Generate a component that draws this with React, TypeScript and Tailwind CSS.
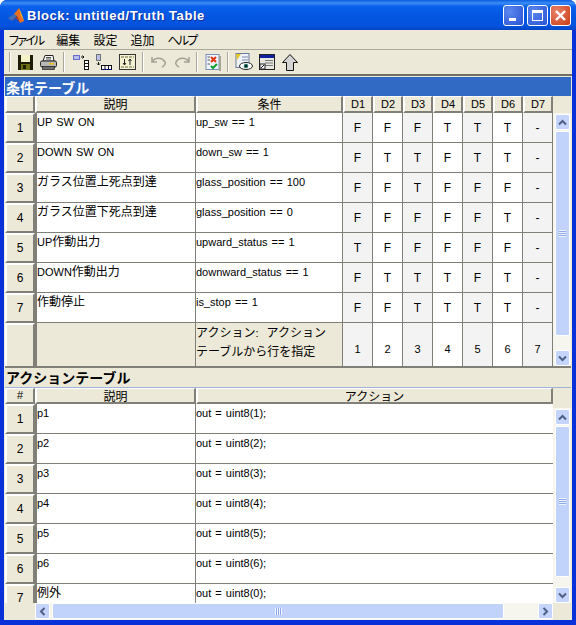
const uiFont = "[font-family:'Noto_Sans_CJK_JP',sans-serif]";

const menus = ["ファイル", "編集", "設定", "追加", "ヘルプ"];

const conditions = [
  { desc: "UP SW ON", cond: "up_sw == 1", d: "FFFTTT-" },
  { desc: "DOWN SW ON", cond: "down_sw == 1", d: "FTTFTT-" },
  { desc: "ガラス位置上死点到達", cond: "glass_position == 100", d: "FFTFFF-" },
  { desc: "ガラス位置下死点到達", cond: "glass_position == 0", d: "FFFFFT-" },
  { desc: "UP作動出力", cond: "upward_status == 1", d: "TFFFFF-" },
  { desc: "DOWN作動出力", cond: "downward_status == 1", d: "FTTTFT-" },
  { desc: "作動停止", cond: "is_stop == 1", d: "FFTTTT-" },
];

const actions = [
  { desc: "p1", code: "out = uint8(1);" },
  { desc: "p2", code: "out = uint8(2);" },
  { desc: "p3", code: "out = uint8(3);" },
  { desc: "p4", code: "out = uint8(4);" },
  { desc: "p5", code: "out = uint8(5);" },
  { desc: "p6", code: "out = uint8(6);" },
  { desc: "例外", code: "out = uint8(0);" },
];

// latin runs are set smaller and with wider spaces, the way the bitmap font looks
function Txt({ text }: { text: string }) {
  const parts = text.split(/([\x00-\x7f]+)/).filter(Boolean);
  return (
    <>
      {parts.map((p, i) =>
        /^[\x00-\x7f]/.test(p) ? (
          <span key={i} className="text-[11px] [font-family:'Liberation_Sans',sans-serif] [word-spacing:1px] whitespace-pre">
            {p}
          </span>
        ) : (
          <span key={i}>{p}</span>
        )
      )}
    </>
  );
}

function HeadCell({ className, children }: { className: string; children?: React.ReactNode }) {
  return (
    <div
      className={`${className} flex items-center justify-center bg-[#ece9d8] border-t border-l-2 border-white border-r-2 border-r-[#808078] border-b-2 border-b-[#808078] text-[12px] leading-none text-black`}
    >
      {children}
    </div>
  );
}

function RowHead({ n }: { n: number }) {
  return (
    <div className="w-[30px] h-[30px] shrink-0 flex items-center justify-center bg-[#ece9d8] border-t-2 border-l-2 border-white border-r-2 border-r-[#808078] border-b-2 border-b-[#808078] text-[12px] text-black [font-family:'Liberation_Sans',sans-serif]">
      {n}
    </div>
  );
}

// the last row is cut by the scrollbar, so its head has no bottom edge
function LastRowHead({ n }: { n: number }) {
  return (
    <div className="w-[30px] h-[19px] shrink-0 flex justify-center pt-[7px] bg-[#ece9d8] border-t-2 border-l-2 border-white border-r-2 border-r-[#808078] text-[12px] leading-[10px] text-black [font-family:'Liberation_Sans',sans-serif]">
      {n}
    </div>
  );
}

function ScrollArrow({ dir }: { dir: "up" | "down" | "left" | "right" }) {
  const rot = { up: "", down: "rotate-180", left: "-rotate-90", right: "rotate-90" }[dir];
  return (
    <div className="w-[15px] h-[16px] shrink-0 flex items-center justify-center rounded-[2px] bg-[#c4d4fb] border border-white">
      <svg width="9" height="7" viewBox="0 0 9 7" className={rot}>
        <path d="M1 5.5 L4.5 2 L8 5.5" fill="none" stroke="#4d6185" strokeWidth="2" />
      </svg>
    </div>
  );
}

function VScroll({ thumb }: { thumb: string }) {
  return (
    <div className="flex-1 min-h-0 w-[18px] flex flex-col items-start pl-[2px] pt-px bg-[#f6f5ee]">
      <ScrollArrow dir="up" />
      <div className={`${thumb} w-[15px] mt-px rounded-[2px] bg-[#c1d2fb] border border-white flex items-center justify-center`}>
        <div className="w-[7px] h-[7px] bg-[repeating-linear-gradient(to_bottom,#eef3fe_0,#eef3fe_1px,#8fa9e8_1px,#8fa9e8_2px)]" />
      </div>
      <div className="flex-1" />
      <ScrollArrow dir="down" />
    </div>
  );
}

function Sep() {
  return <div className="w-[2px] h-[20px] mx-[3px] bg-[#a9a799] border-r border-white" />;
}

function ToolIcon({ children, className = "" }: { children: React.ReactNode; className?: string }) {
  return <div className={`w-[23px] h-[22px] flex items-center justify-center ${className}`}>{children}</div>;
}

const captionBtn = "w-[21px] h-[21px] rounded-[3px] border border-white";

export default function App() {
  return (
    <div className={`${uiFont} w-[576px] h-[625px] overflow-hidden flex flex-col bg-[#0831d9] rounded-t-[7px]`}>
      {/* title bar */}
      <div className="h-[30px] shrink-0 flex items-center pl-[8px] pr-[5px] bg-[linear-gradient(to_bottom,#0a5be0_0%,#3a8cf5_10%,#0860ea_22%,#0355e0_60%,#0553e0_85%,#0246c4_100%)]">
        <svg width="17" height="17" viewBox="0 0 17 17" className="mr-[2px] mt-px">
          <path d="M0 11 L6 7 L9 9 L4 14 Z" fill="#3f6fb4" />
          <path d="M6 7 L11 1 L16 14 L12 16 L9 9 Z" fill="#e8701c" />
          <path d="M11 1 L14 8 L16 14 L13 9 Z" fill="#f6b23c" />
          <path d="M4 14 L9 9 L12 16 L8 11 Z" fill="#b5361a" />
        </svg>
        <span className="text-white font-bold text-[13px] tracking-[0.55px] mt-px [font-family:'Liberation_Sans',sans-serif] [text-shadow:1px_1px_0_#0f2f9c]">
          Block: untitled/Truth Table
        </span>
        <div className="ml-auto flex">
          <div className={`${captionBtn} mr-[3px] bg-[radial-gradient(circle_at_30%_30%,#5a88ee,#2a52d4)] flex items-end pl-[5px] pb-[4px]`}>
            <div className="w-[7px] h-[3px] bg-white" />
          </div>
          <div className={`${captionBtn} mr-[2px] bg-[radial-gradient(circle_at_30%_30%,#5a88ee,#2a52d4)] flex items-center justify-center`}>
            <div className="w-[11px] h-[11px] border border-white border-t-[3px]" />
          </div>
          <div className={`${captionBtn} bg-[radial-gradient(circle_at_30%_30%,#e8826a,#c83c14)] flex items-center justify-center`}>
            <svg width="13" height="13" viewBox="0 0 13 13">
              <path d="M2 2 L11 11 M11 2 L2 11" stroke="#fff" strokeWidth="2.4" />
            </svg>
          </div>
        </div>
      </div>

      <div className="flex-1 min-h-0 mx-[4px] mb-[5px] flex flex-col bg-[#ece9d8]">
        {/* menu */}
        <div className="h-[20px] shrink-0 flex items-center gap-[13px] pl-[5px] border-b border-[#aca899] text-[12px] text-black [font-feature-settings:'palt']">
          {menus.map((m) => (
            <span key={m} className={/[ァ-ヶ]/.test(m) ? "tracking-[-1.8px]" : ""}>
              {m}
            </span>
          ))}
        </div>

        {/* toolbar */}
        <div className="h-[26px] shrink-0 flex items-center pl-[2px] border-b-2 border-[#716f64]">
          <Sep />
          <ToolIcon>
            <svg width="15" height="15" viewBox="0 0 15 15">
              <path d="M0 0 H15 V15 H0 Z" fill="#1c1c08" />
              <rect x="3" y="0" width="9" height="7" fill="#f4f2c8" />
              <rect x="3" y="9" width="9" height="6" fill="#6e6e14" />
              <rect x="5" y="10" width="3" height="4" fill="#1c1c08" />
            </svg>
          </ToolIcon>
          <ToolIcon>
            <svg width="17" height="15" viewBox="0 0 17 15">
              <path d="M5 0.5 H13 L14 6 H3 Z" fill="#fff" stroke="#222" />
              <path d="M6 2.5 H11 M6 4 H11" stroke="#555" />
              <rect x="0.5" y="6" width="16" height="6" rx="1.5" fill="#b8b8b8" stroke="#222" />
              <rect x="9" y="8" width="5" height="1.5" fill="#e8c000" />
              <rect x="2.5" y="11.5" width="12" height="3" fill="#707070" stroke="#222" strokeWidth="0.7" />
            </svg>
          </ToolIcon>
          <Sep />
          <ToolIcon className="ml-px">
            <svg width="18" height="17" viewBox="0 0 18 17">
              <rect x="1.5" y="1.5" width="6" height="4" fill="#b8c0e8" stroke="#0000c0" strokeDasharray="1 1" />
              <path d="M9 3 H12 M12 3 L10.5 1.5 M12 3 L10.5 4.5" stroke="#111" />
              <rect x="12.5" y="6.5" width="4" height="9" fill="#fff" stroke="#111" />
              <path d="M12 9.5 H17 M12 12.5 H17" stroke="#111" />
            </svg>
          </ToolIcon>
          <ToolIcon>
            <svg width="18" height="17" viewBox="0 0 18 17">
              <rect x="1.5" y="0.5" width="4" height="6" fill="#b8c0e8" stroke="#111" strokeDasharray="1 1" />
              <path d="M3.5 8 V11 M3.5 11 L2 9.5 M3.5 11 L5 9.5" stroke="#111" />
              <rect x="6.5" y="11.5" width="10" height="4" fill="#fff" stroke="#111" />
              <path d="M10 11 V16 M13.5 11 V16" stroke="#111" />
              <path d="M7 15.5 H16" stroke="#0000d0" strokeDasharray="1 1" />
            </svg>
          </ToolIcon>
          <ToolIcon className="ml-px">
            <svg width="17" height="16" viewBox="0 0 17 16">
              <rect x="0.5" y="0.5" width="16" height="15" fill="#f4f2d0" stroke="#333" />
              <path d="M2 3 H15 M2 13 H15" stroke="#6a6a40" strokeDasharray="3 1" />
              <path d="M5.5 5 V11 M4 9 L5.5 11 L7 9 M11 5 V11 M9.5 7 L11 5 L12.5 7" fill="none" stroke="#222" />
            </svg>
          </ToolIcon>
          <Sep />
          <ToolIcon>
            <svg width="16" height="12" viewBox="0 0 16 12">
              <path d="M1 1 V6 H6 M1 6 C4 1 11 1 14 6 C15 8 13 10 11 11" fill="none" stroke="#a3a195" strokeWidth="1.5" />
            </svg>
          </ToolIcon>
          <ToolIcon>
            <svg width="16" height="12" viewBox="0 0 16 12">
              <path d="M15 1 V6 H10 M15 6 C12 1 5 1 2 6 C1 8 3 10 5 11" fill="none" stroke="#a3a195" strokeWidth="1.5" />
            </svg>
          </ToolIcon>
          <Sep />
          <ToolIcon>
            <svg width="16" height="17" viewBox="0 0 16 17">
              <rect x="1" y="0.5" width="13" height="15" fill="#f0f4ff" stroke="#7890b8" />
              <rect x="14" y="2" width="2" height="15" fill="#a8a698" />
              <path d="M6 3 L11 8 M11 3 L6 8" stroke="#e03010" strokeWidth="2" />
              <path d="M6 12 L8 14 L12 10" fill="none" stroke="#10a030" strokeWidth="2" />
              <path d="M2.5 3 H5 M2.5 6 H5 M2.5 10 H5" stroke="#555" />
            </svg>
          </ToolIcon>
          <Sep />
          <ToolIcon>
            <svg width="18" height="18" viewBox="0 0 18 18">
              <rect x="1" y="0.5" width="13" height="14" fill="#eef2fa" stroke="#6a7a9a" />
              <path d="M1 1 H6 L2 7 Z" fill="#e8c820" />
              <path d="M7 4 H13 M7 7 H13" stroke="#7a8ab0" />
              <ellipse cx="11" cy="13" rx="6.5" ry="3.5" fill="#fff" stroke="#222" />
              <circle cx="11" cy="13" r="2.3" fill="#1f7a70" />
              <circle cx="11" cy="13" r="1" fill="#000" />
            </svg>
          </ToolIcon>
          <ToolIcon>
            <svg width="16" height="16" viewBox="0 0 16 16">
              <rect x="0.5" y="0.5" width="15" height="15" fill="#e8e8e0" stroke="#222" />
              <rect x="1" y="1" width="14" height="3" fill="#1020a0" />
              <path d="M6 6.5 H14 M6 9 H14 M6 11.5 H14" stroke="#777" />
              <rect x="1" y="10" width="5" height="5" fill="#fff" stroke="#222" />
              <path d="M2 14 L5 11" stroke="#111" />
            </svg>
          </ToolIcon>
          <ToolIcon>
            <svg width="16" height="17" viewBox="0 0 16 17">
              <path d="M8 0.5 L15.5 8.5 H11.5 V16.5 H4.5 V8.5 H0.5 Z" fill="#d4d4d4" stroke="#111" />
            </svg>
          </ToolIcon>
        </div>

        {/* condition table */}
        <div className="mx-px mt-px flex flex-col">
          <div className="h-[19px] flex items-center pl-px bg-[#316ac5] text-white font-bold text-[14px] leading-none">
            条件テーブル
          </div>
          <div className="flex">
            <div className="flex-1 min-w-0 flex flex-col">
              <div className="flex h-[17px]">
                <HeadCell className="w-[30px]" />
                <HeadCell className="w-[161px]">説明</HeadCell>
                <HeadCell className="w-[147px]">条件</HeadCell>
                {[1, 2, 3, 4, 5, 6, 7].map((n) => (
                  <HeadCell key={n} className="w-[30px]">
                    <Txt text={`D${n}`} />
                  </HeadCell>
                ))}
              </div>
              {conditions.map((row, i) => (
                <div key={row.cond} className="flex h-[30px]">
                  <RowHead n={i + 1} />
                  <div className="w-[161px] bg-white border-l-2 border-l-[#808078] border-b border-b-[#808078] border-r border-r-[#808078] text-[12px] leading-[16px] text-black whitespace-nowrap">
                    <Txt text={row.desc} />
                  </div>
                  <div className="w-[147px] bg-white border-b border-b-[#808078] border-r border-r-[#808078] text-[12px] leading-[16px] text-black whitespace-nowrap">
                    <Txt text={row.cond} />
                  </div>
                  {row.d.split("").map((v, j) => (
                    <div
                      key={j}
                      className={`w-[30px] flex items-center justify-center border-b border-b-[#808078] border-r border-r-[#808078] text-[12px] text-black [font-family:'Liberation_Sans',sans-serif] ${
                        j % 2 === 0 ? "bg-[#f3f3f3]" : "bg-white"
                      }`}
                    >
                      {v}
                    </div>
                  ))}
                </div>
              ))}
              <div className="flex h-[43px]">
                <div className="w-[30px] bg-[#ece9d8] border-t-2 border-l-2 border-white border-r-2 border-r-[#808078]" />
                <div className="w-[161px] border-l-2 border-l-[#808078] border-r border-r-[#808078]" />
                <div className="w-[147px] border-r border-r-[#808078] text-[12px] leading-[18px] text-black whitespace-pre">
                  <Txt text={"アクション:  アクション"} />
                  <br />
                  テーブルから行を指定
                </div>
                {[1, 2, 3, 4, 5, 6, 7].map((n) => (
                  <div
                    key={n}
                    className={`w-[30px] flex items-end justify-center pb-[8px] border-r border-r-[#808078] text-[11px] leading-[18px] text-black [font-family:'Liberation_Sans',sans-serif] ${
                      n % 2 === 1 ? "bg-[#f3f3f3]" : "bg-white"
                    }`}
                  >
                    {n}
                  </div>
                ))}
              </div>
            </div>
            <div className="w-[18px] shrink-0 flex flex-col">
              <div className="h-[17px] shrink-0" />
              <VScroll thumb="h-[205px]" />
            </div>
          </div>
        </div>

        {/* action table */}
        <div className="mx-px flex-1 min-h-0 border-t-2 border-[#808078] flex flex-col">
          <div className="h-[20px] shrink-0 flex items-center pl-px pb-[2px] text-black font-bold text-[14px] leading-none border-b border-[#9db3d6]">
            アクションテーブル
          </div>
          <div className="flex-1 min-h-0 flex">
            <div className="flex-1 min-w-0 flex flex-col">
              <div className="h-[16px] shrink-0 flex">
                <HeadCell className="w-[30px]">
                  <Txt text="#" />
                </HeadCell>
                <HeadCell className="w-[161px]">説明</HeadCell>
                <HeadCell className="flex-1">アクション</HeadCell>
              </div>
              <div className="flex-1 min-h-0">
                {actions.map((row, i) => {
                  const last = i === actions.length - 1;
                  return (
                    <div key={row.desc} className={`flex ${last ? "h-[19px]" : "h-[30px]"}`}>
                      {last ? <LastRowHead n={i + 1} /> : <RowHead n={i + 1} />}
                      <div
                        className={`w-[161px] bg-white border-l-2 border-l-[#808078] border-r border-r-[#808078] text-[12px] leading-[16px] text-black ${
                          last ? "" : "border-b border-b-[#808078]"
                        }`}
                      >
                        <Txt text={row.desc} />
                      </div>
                      <div
                        className={`flex-1 bg-white text-[12px] leading-[16px] text-black ${
                          last ? "" : "border-b border-b-[#808078]"
                        }`}
                      >
                        <Txt text={row.code} />
                      </div>
                    </div>
                  );
                })}
              </div>
              <div className="h-[17px] shrink-0 flex bg-[#ece9d8]">
                <div className="w-[30px] shrink-0" />
                <div className="flex-1 flex items-start bg-[#f6f5ee]">
                  <ScrollArrow dir="left" />
                  <div className="w-[452px] h-[16px] ml-[2px] rounded-[2px] bg-[#c1d2fb] border border-white flex items-center justify-center">
                    <div className="w-[7px] h-[7px] bg-[repeating-linear-gradient(to_right,#eef3fe_0,#eef3fe_1px,#8fa9e8_1px,#8fa9e8_2px)]" />
                  </div>
                  <div className="flex-1" />
                  <ScrollArrow dir="right" />
                </div>
              </div>
            </div>
            <div className="w-[18px] shrink-0 flex flex-col bg-[#ece9d8]">
              <div className="h-[20px] shrink-0" />
              <VScroll thumb="h-[151px]" />
              <div className="h-[17px] shrink-0" />
            </div>
          </div>
        </div>
      </div>
    </div>
  );
}
